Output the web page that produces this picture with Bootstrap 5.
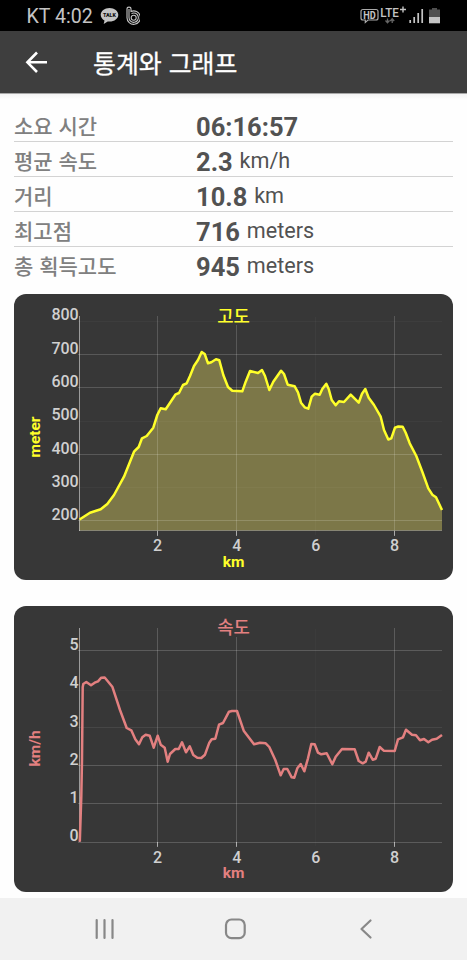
<!DOCTYPE html>
<html lang="ko">
<head>
<meta charset="utf-8">
<meta name="viewport" content="width=device-width, initial-scale=1">
<title>통계와 그래프</title>
<link rel="stylesheet" href="https://cdn.jsdelivr.net/npm/bootstrap@5.3.0/dist/css/bootstrap.min.css">
<style>
body { font-family: Roboto, "Noto Sans CJK KR", sans-serif; background: #fefefe; height: 960px; overflow: hidden; }
.status-bar { height: 31px; background: #000; color: #c4c4c4; font-size: 19.6px; line-height: 31px; padding-left: 26.500px; padding-right: 26px; }
.carrier { width: 67.500px; white-space: nowrap; padding-top: 2px; }
.app-bar { height: 62px; background: #3e3e3e; padding-left: 24px; }
.app-title { font-family: "Noto Sans CJK KR", sans-serif; font-size: 24.9px; font-weight: 400; line-height: 30px; margin-left: 43px; -webkit-text-stroke: .3px #fff; }
.bar-shadow { height: 7px; background: linear-gradient(#a8a8a8 0 1px, #f3f3f3 1px, #fefefe); }
.stats { padding: 7px 14px 0; }
.stat { height: 35.1px; border-bottom: 1.5px solid #d3d3d3; color: #525252; }
.stat:last-child { border: 0; }
.stat-name { width: 182px; font-family: "Noto Sans CJK KR", sans-serif; font-size: 21px; font-weight: 500; line-height: 30px; color: #808080; padding-top: 3px; }
.stat-value { font-size: 21.6px; line-height: 30px; padding-top: 4px; }
.stat-value b { font-size: 25.5px; font-weight: 700; margin-right: 1.5px; vertical-align: -2.5px; }
.charts { padding: 12px 14px 0; gap: 26px; }
.chart { height: 286px; border-radius: 12px; background: #373737; overflow: hidden; }
.chart svg { display: block; }
.tick text { font-size: 16px; font-weight: 500; fill: #d0d0d0; }
.axis-name { font-size: 15.5px; font-weight: 700; text-anchor: middle; }
.chart-name { font-family: "Noto Sans CJK KR", sans-serif; font-size: 17.8px; font-weight: 500; text-anchor: middle; }
.yellow { fill: #ffff2a; }
.pink { fill: #e38080; }
.nav-keys { height: 62px; background: #f1f1f1; }
</style>
<script src="https://cdn.jsdelivr.net/npm/bootstrap@5.3.0/dist/js/bootstrap.bundle.min.js"></script>
</head>
<body class="d-flex flex-column">
<header>
  <div class="status-bar d-flex align-items-center">
    <span class="carrier">KT 4:02</span>
    <svg class="ms-1" width="42" height="24" viewBox="98 4 42 24">
      <path d="M109.500 8c-5 0-8.800 3-8.800 6.800 0 2.500 1.500 4.500 3.800 5.700l-.8 3.500 4-2.500 1.800.1c5 0 8.800-3 8.800-6.800S114.500 8 109.500 8z" fill="#c4c4c4"/>
      <text x="109.400" y="17.200" font-size="6.200" font-weight="900" text-anchor="middle" textLength="13" lengthAdjust="spacingAndGlyphs" fill="#111">TALK</text>
      <g fill="none" stroke="#c4c4c4" stroke-width="1.100">
        <path d="M127 17.500V9q0-1.900 2-1.900t2 1.900v2.500a6.700 6.700 0 1 1-4 6z"/>
        <path d="M129 17.500V9M129 17.500a4.700 4.700 0 1 0 2.500-4"/>
        <circle cx="133.700" cy="17.700" r="2.500"/>
      </g>
    </svg>
    <svg class="ms-auto" width="81" height="24" viewBox="360 4 81 24">
      <path d="M363 9.500h13q2 0 2 2v6.500q0 2-2 2h-8l-2.700 2.500V20H363q-2 0-2-2v-6.500q0-2 2-2z" fill="none" stroke="#aaa" stroke-width="1.200"/>
      <text x="369.500" y="18.600" font-size="10.500" font-weight="700" text-anchor="middle" textLength="12.500" lengthAdjust="spacingAndGlyphs" fill="#c4c4c4">HD</text>
      <text x="380.300" y="17.300" font-size="12.500" font-weight="500" textLength="18.500" lengthAdjust="spacingAndGlyphs" fill="#c4c4c4">LTE</text>
      <path d="M400 9.500h6M403 6.500v6" stroke="#c4c4c4" stroke-width="1.400"/>
      <path d="M387.500 18.500v4m-2-2 2 2.200 2-2.200M392.200 23v-4m-2 2 2-2.200 2 2.200" fill="none" stroke="#666" stroke-width="1.300"/>
      <path d="M410.200 20v3M414.200 17v6M418.200 13v10M422.200 9v14" stroke="#c4c4c4" stroke-width="1.700"/>
      <path d="M429 9.500h3V8h5v1.500h3V17h-11z" fill="#505050"/>
      <path d="M429 17h11v6.300h-11z" fill="#c4c4c4"/>
    </svg>
  </div>
  <div class="app-bar d-flex align-items-center text-white">
    <svg width="26" height="24" viewBox="24 50 26 24" fill="none" stroke="#fff" stroke-width="2.600"><path d="M47 62.300H27.500M37 52.500l-9.600 9.800 9.600 9.700"/></svg>
    <h1 class="app-title mb-0">통계와 그래프</h1>
  </div>
  <div class="bar-shadow"></div>
</header>
<main class="flex-grow-1">
  <section class="stats">
    <div class="stat d-flex"><div class="stat-name">소요 시간</div><div class="stat-value"><b>06:16:57</b></div></div>
    <div class="stat d-flex"><div class="stat-name">평균 속도</div><div class="stat-value"><b>2.3</b> km/h</div></div>
    <div class="stat d-flex"><div class="stat-name">거리</div><div class="stat-value"><b>10.8</b> km</div></div>
    <div class="stat d-flex"><div class="stat-name">최고점</div><div class="stat-value"><b>716</b> meters</div></div>
    <div class="stat d-flex"><div class="stat-name">총 획득고도</div><div class="stat-value"><b>945</b> meters</div></div>
  </section>
  <section class="charts d-flex flex-column">
    <div class="chart">
      <svg width="439" height="286" viewBox="14 294 439 286">
        <text class="chart-name yellow" x="233.500" y="323">고도</text>
        <path d="M79.500 519.500 90 512.700 100.700 509.300 107.300 504 114 495 124 476.700 134 451.700 138.700 447 142 438.300 146.700 436 153.300 427.700 157.300 415 160.700 408.300 165.700 409.300 175.700 394.300 179 393 183 385 186.700 383.300 190 376 194 366 198 360 201.700 352 204.700 354 208 363.300 211.300 362.300 216 359.300 219.300 360.300 223.300 375 228 387 232.300 390.700 242.300 391.300 245.700 381.700 250 371 258 373 262 370 265 376 269.300 390 273.300 381.700 281 370.700 284 374 287.700 384.700 294.700 386.300 298 392.300 301 402.700 304.700 407.300 308.300 408.700 311.700 396.700 315 393.700 319.700 394.700 322.300 389 326.300 383.700 328.700 389 331.700 400 335.700 405.300 339 401.300 344 402 350.700 394.700 358.700 402.700 362 393.700 365.300 389 368.700 397.700 374 405 380.700 416.700 384 430 388.300 439.500 391.300 438.300 395 427.700 398.300 426.500 402.700 426.700 405.700 432.700 409.700 443.300 416.300 456 422.300 471.700 428.300 488.300 432.300 494.700 436 497.300 442 510V530.500H79.500z" fill="#7c7748"/>
        <g stroke="#fff" stroke-width="1">
          <path d="M78 354.500H442M78 387.500H442M78 454.500H442M78 520.500H442" stroke-opacity=".17"/>
          <path d="M78 321.500H442M78 421.500H442M78 487.500H442M315.500 317V535" stroke-opacity=".03"/>
          <path d="M157.500 316V535M236.500 325V535M394.500 316V535" stroke-opacity=".17"/>
          <path d="M79 530.500H442" stroke-opacity=".28"/>
          <path d="M79.500 316V531M157.500 531V536M236.500 531V536M394.500 531V536" stroke-opacity=".5"/>
        </g>
        <path d="M79.500 519.500 90 512.700 100.700 509.300 107.300 504 114 495 124 476.700 134 451.700 138.700 447 142 438.300 146.700 436 153.300 427.700 157.300 415 160.700 408.300 165.700 409.300 175.700 394.300 179 393 183 385 186.700 383.300 190 376 194 366 198 360 201.700 352 204.700 354 208 363.300 211.300 362.300 216 359.300 219.300 360.300 223.300 375 228 387 232.300 390.700 242.300 391.300 245.700 381.700 250 371 258 373 262 370 265 376 269.300 390 273.300 381.700 281 370.700 284 374 287.700 384.700 294.700 386.300 298 392.300 301 402.700 304.700 407.300 308.300 408.700 311.700 396.700 315 393.700 319.700 394.700 322.300 389 326.300 383.700 328.700 389 331.700 400 335.700 405.300 339 401.300 344 402 350.700 394.700 358.700 402.700 362 393.700 365.300 389 368.700 397.700 374 405 380.700 416.700 384 430 388.300 439.500 391.300 438.300 395 427.700 398.300 426.500 402.700 426.700 405.700 432.700 409.700 443.300 416.300 456 422.300 471.700 428.300 488.300 432.300 494.700 436 497.300 442 510" fill="none" stroke="#ffff2a" stroke-width="2.500" stroke-linejoin="round"/>
        <g class="tick" text-anchor="end">
          <text x="78.700" y="320.300">800</text><text x="78.700" y="353.600">700</text><text x="78.700" y="387">600</text><text x="78.700" y="420.300">500</text><text x="78.700" y="453.600">400</text><text x="78.700" y="486.800">300</text><text x="78.700" y="520.300">200</text>
        </g>
        <g class="tick" text-anchor="middle">
          <text x="157.500" y="551.300">2</text><text x="236.800" y="551.300">4</text><text x="315.700" y="551.300">6</text><text x="394.500" y="551.300">8</text>
        </g>
        <text class="axis-name yellow" x="233.500" y="567">km</text>
        <text class="axis-name yellow" transform="translate(40 437) rotate(-90)">meter</text>
      </svg>
    </div>
    <div class="chart">
      <svg width="439" height="286" viewBox="14 606 439 286">
        <text class="chart-name pink" x="233.500" y="634">속도</text>
        <g stroke="#fff" stroke-width="1">
          <path d="M78 650.500H442M78 765.500H442M78 803.500H442M78 842.500H442" stroke-opacity=".18"/>
          <path d="M78 727.500H442" stroke-opacity=".08"/>
          <path d="M78 690.500H442M315.500 629V846" stroke-opacity=".025"/>
          <path d="M157.500 628V846M236.500 637V846M394.500 628V846" stroke-opacity=".18"/>
          <path d="M79.500 628V842M157.500 842V847M236.500 842V847M394.500 842V847" stroke-opacity=".5"/>
        </g>
        <path d="M79.800 841.700 81.300 796.700 82 760 82.700 687.300 83.300 684 86.300 682 91 685.300 94.700 682.700 98 681.300 101.300 677.700 104.700 677.500 112.300 686.700 120 710 126.700 728 131.300 730.300 135.300 739.300 139 744.300 142.300 737.300 145.700 734.700 149.700 735.700 153.700 747.700 157.700 735.700 160.700 744.700 164.700 747.700 167.700 761.700 170 754 175.300 749 178.700 749 182 742.300 186 752.300 189.700 746.300 193.300 755 197.300 757.700 201.300 758 205 754.700 209.300 742.700 211.700 739.300 215.300 738.700 219 724.700 223 723 229 711.700 232 711 237 711 243.700 730.700 254 744.300 260 742.700 265.700 743.300 269.300 747 275.300 760 280.700 775.300 283.700 769 287.300 769 291.700 777.300 294.300 777.700 297.300 768.300 300.700 764 304.300 771.300 308 758.300 311.300 744 314.700 744.300 318 752.700 321.300 754.300 326.700 753.300 332.300 764.300 335.700 756.700 342 749 354.700 749.300 358.700 761 362.700 763.300 365.700 761.700 368.700 752.700 372.700 759.700 375.700 758.700 379.700 747 383.700 750.700 394.700 751 398 739.300 403 737.300 406 729.700 412 734.700 416 735.300 420 740.300 424 739 428.300 742.300 432 739.700 436.700 738.700 442 735" fill="none" stroke="#e38080" stroke-width="2.500" stroke-linejoin="round"/>
        <g class="tick" text-anchor="end">
          <text x="78.700" y="650">5</text><text x="78.700" y="688.300">4</text><text x="78.700" y="726.600">3</text><text x="78.700" y="764.700">2</text><text x="78.700" y="803">1</text><text x="78.700" y="841.300">0</text>
        </g>
        <g class="tick" text-anchor="middle">
          <text x="157.500" y="863">2</text><text x="236.800" y="863">4</text><text x="315.700" y="863">6</text><text x="394.500" y="863">8</text>
        </g>
        <text class="axis-name pink" x="233.500" y="878">km</text>
        <text class="axis-name pink" transform="translate(40 748.500) rotate(-90)">km/h</text>
      </svg>
    </div>
  </section>
</main>
<footer class="nav-keys">
  <svg class="d-block" width="467" height="62" viewBox="0 898 467 62" fill="none" stroke="#888" stroke-width="2.200" stroke-linecap="round" stroke-linejoin="round">
    <path d="M96.700 920v18M104.500 920v18M112.500 920v18"/>
    <rect x="226" y="919.500" width="18.700" height="18.700" rx="5.500"/>
    <path d="M370.500 920.500 361.500 929l9 8.500"/>
  </svg>
</footer>
</body>
</html>
